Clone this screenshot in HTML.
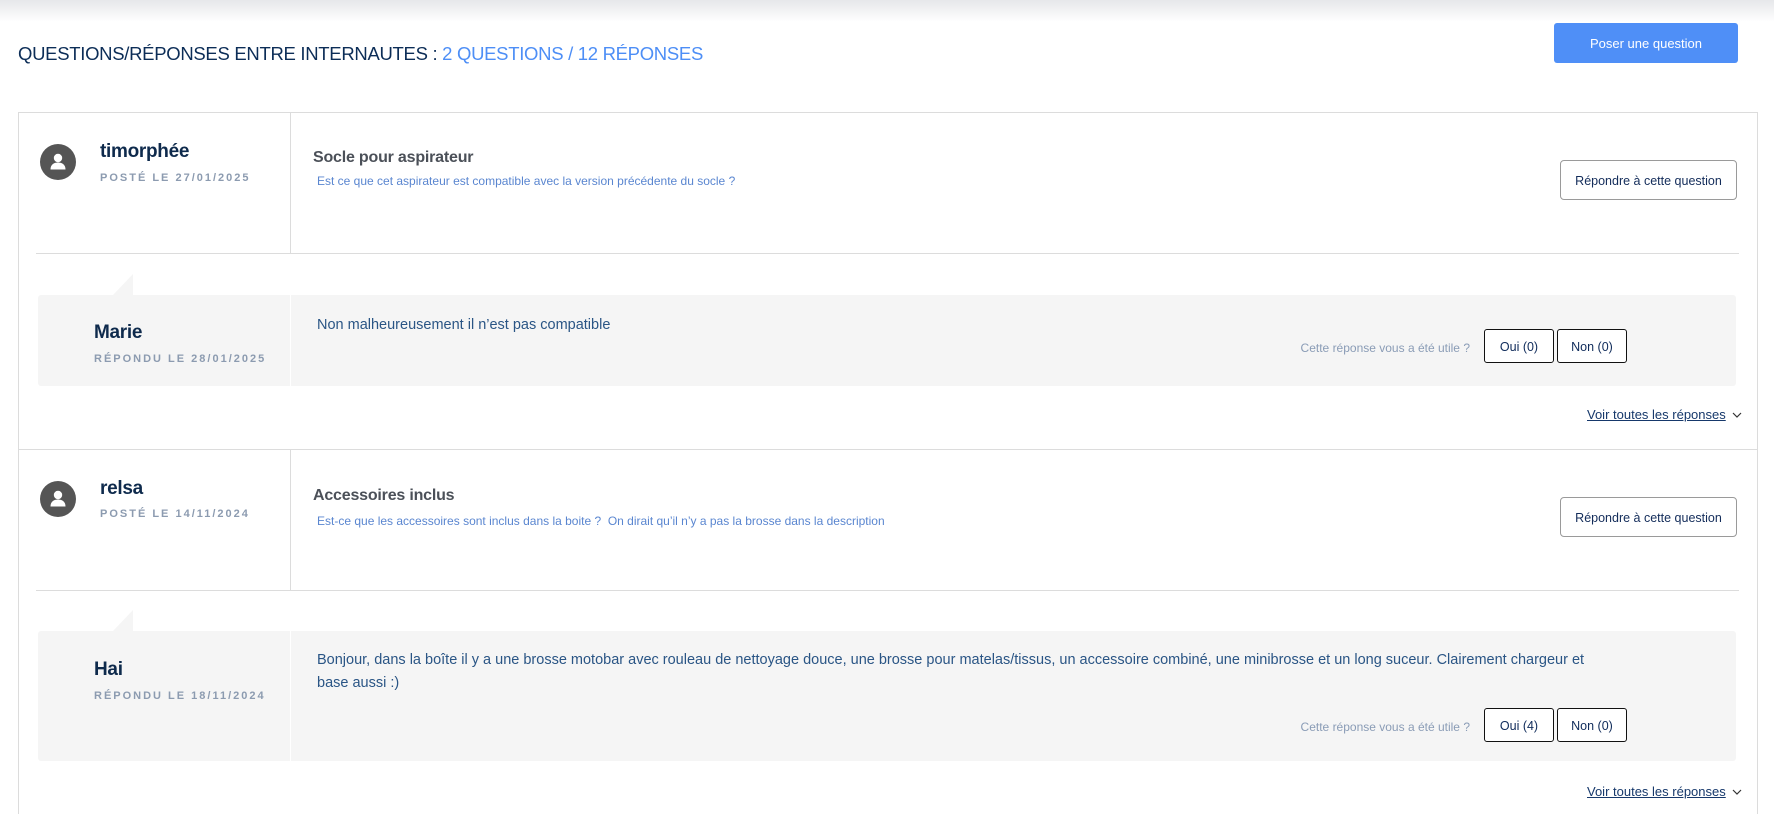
<!DOCTYPE html>
<html><head><meta charset="utf-8"><style>
*{margin:0;padding:0;box-sizing:border-box}
html{width:1774px;height:814px;overflow:hidden}
body{width:1774px;height:814px;overflow:hidden;background:#fff;font-family:"Liberation Sans",Arial,sans-serif;position:relative}
.a{position:absolute;white-space:nowrap}
.top{position:absolute;left:0;top:0;width:1774px;height:22px;background:linear-gradient(#e6e7ea,#fff)}
.title{left:18px;top:43px;font-size:18.5px;color:#0c2d57;letter-spacing:-0.3px}
.title span{color:#4d8ef6}
.poser{left:1554px;top:23px;width:184px;height:40px;background:#4f8ff7;border-radius:3px;color:#fff;font-size:13px;text-align:center;line-height:42px}
.box{position:absolute;left:18px;top:112px;width:1740px;height:702px;border:1px solid #dcdcdc;border-bottom:none}
.vl{position:absolute;width:1px;background:#dcdcdc}
.hl{position:absolute;height:1px;background:#dcdcdc}
.av{position:absolute;width:36px;height:36px;border-radius:50%;background:#555}
.name{font-size:19px;color:#0e2a4c;font-weight:bold;letter-spacing:-0.3px}
.date{font-size:11px;color:#8c9bb0;letter-spacing:2px;font-weight:bold}
.qt{font-size:16px;color:#4b5058;font-weight:bold;letter-spacing:-0.2px}
.qd{font-size:12px;color:#5a86d0}
.rep{position:absolute;width:177px;height:40px;border:1px solid #9a9a9a;border-radius:4px;font-size:12.5px;color:#132c5a;text-align:center;line-height:40px;background:#fff}
.ans{position:absolute;left:38px;width:1698px;background:#f5f5f5;border-radius:3px}
.tri{position:absolute;width:0;height:0;border-left:20px solid transparent;border-bottom:21px solid #f5f5f5}
.at{font-size:14.5px;color:#2a5585;line-height:23px}
.util{font-size:12px;color:#8a9cb6}
.yn{position:absolute;width:70px;height:34px;border:1px solid #111;border-radius:3px;font-size:12.5px;color:#0f2b5a;text-align:center;line-height:34px;background:#fff}
.voir{font-size:13px;color:#16386b;text-decoration:underline}
</style></head><body>
<div class="top"></div>
<div class="a title">QUESTIONS/RÉPONSES ENTRE INTERNAUTES : <span>2 QUESTIONS / 12 RÉPONSES</span></div>
<div class="a poser">Poser une question</div>
<div class="box"></div>

<!-- Q1 -->
<div class="vl" style="left:290px;top:113px;height:140px"></div>
<div class="av" style="left:40px;top:144px"><svg width="36" height="36" viewBox="0 0 36 36"><circle cx="18" cy="14" r="4.2" fill="#fff"/><path d="M10.5 25.5c0-5 3.5-7 7.5-7s7.5 2 7.5 7z" fill="#fff"/></svg></div>
<div class="a name" style="left:100px;top:141px">timorphée</div>
<div class="a date" style="left:100px;top:172px">POSTÉ LE 27/01/2025</div>
<div class="a qt" style="left:313px;top:149px">Socle pour aspirateur</div>
<div class="a qd" style="left:317px;top:174px">Est ce que cet aspirateur est compatible avec la version précédente du socle ?</div>
<div class="rep" style="left:1560px;top:160px">Répondre à cette question</div>
<div class="hl" style="left:36px;top:253px;width:1703px"></div>
<div class="tri" style="left:113px;top:274px"></div>
<div class="ans" style="top:295px;height:91px"></div>
<div class="vl" style="left:290px;top:295px;height:91px;background:#fff"></div>
<div class="a name" style="left:94px;top:322px">Marie</div>
<div class="a date" style="left:94px;top:353px">RÉPONDU LE 28/01/2025</div>
<div class="a at" style="left:317px;top:314px">Non malheureusement il n’est pas compatible</div>
<div class="a util" style="right:304px;top:341px">Cette réponse vous a été utile ?</div>
<div class="yn" style="left:1484px;top:329px">Oui (0)</div>
<div class="yn" style="left:1557px;top:329px">Non (0)</div>
<div class="a voir" style="left:1587px;top:407px">Voir toutes les réponses</div>
<svg class="a" style="left:1732px;top:411px" width="10" height="8" viewBox="0 0 10 8"><path d="M1 2l4 4 4-4" fill="none" stroke="#333" stroke-width="1.2"/></svg>

<!-- Q2 -->
<div class="hl" style="left:18px;top:449px;width:1740px"></div>
<div class="vl" style="left:290px;top:449px;height:141px"></div>
<div class="av" style="left:40px;top:481px"><svg width="36" height="36" viewBox="0 0 36 36"><circle cx="18" cy="14" r="4.2" fill="#fff"/><path d="M10.5 25.5c0-5 3.5-7 7.5-7s7.5 2 7.5 7z" fill="#fff"/></svg></div>
<div class="a name" style="left:100px;top:478px">relsa</div>
<div class="a date" style="left:100px;top:508px">POSTÉ LE 14/11/2024</div>
<div class="a qt" style="left:313px;top:487px">Accessoires inclus</div>
<div class="a qd" style="left:317px;top:514px">Est-ce que les accessoires sont inclus dans la boite ?&nbsp; On dirait qu’il n’y a pas la brosse dans la description</div>
<div class="rep" style="left:1560px;top:497px">Répondre à cette question</div>
<div class="hl" style="left:36px;top:590px;width:1703px"></div>
<div class="tri" style="left:113px;top:610px"></div>
<div class="ans" style="top:631px;height:130px"></div>
<div class="vl" style="left:290px;top:631px;height:130px;background:#fff"></div>
<div class="a name" style="left:94px;top:659px">Hai</div>
<div class="a date" style="left:94px;top:690px">RÉPONDU LE 18/11/2024</div>
<div class="a at" style="left:317px;top:649px">Bonjour, dans la boîte il y a une brosse motobar avec rouleau de nettoyage douce, une brosse pour matelas/tissus, un accessoire combiné, une minibrosse et un long suceur. Clairement chargeur et<br>base aussi :)</div>
<div class="a util" style="right:304px;top:720px">Cette réponse vous a été utile ?</div>
<div class="yn" style="left:1484px;top:708px">Oui (4)</div>
<div class="yn" style="left:1557px;top:708px">Non (0)</div>
<div class="a voir" style="left:1587px;top:784px">Voir toutes les réponses</div>
<svg class="a" style="left:1732px;top:788px" width="10" height="8" viewBox="0 0 10 8"><path d="M1 2l4 4 4-4" fill="none" stroke="#333" stroke-width="1.2"/></svg>
</body></html>
